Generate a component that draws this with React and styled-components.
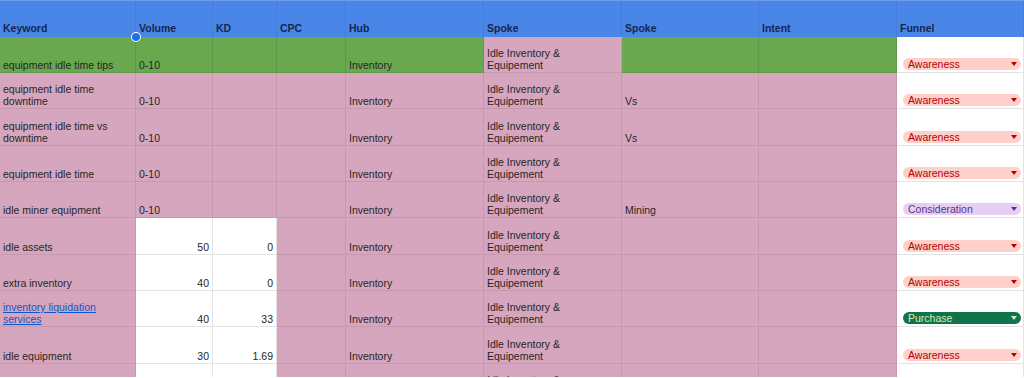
import React from "react";
import styled, { createGlobalStyle } from "styled-components";

const GlobalStyle = createGlobalStyle`
  html, body {
    margin: 0;
    padding: 0;
    background: #fff;
  }
  * {
    box-sizing: border-box;
  }
`;

const colors = {
  green: "#6aa84f",
  pink: "#d5a6bd",
  white: "#ffffff",
};

const lines = {
  green: "#5f9848",
  pink: "#c898af",
  white: "#e3e3e3",
};

const Sheet = styled.div`
  width: 1024px;
  height: 377px;
  overflow: hidden;
  display: grid;
  grid-template-columns: 136px 77px 64px 69px 138px 138px 137px 138px 127px;
  grid-template-rows: ${(p) => p.$rows};
  font-family: "Liberation Sans", Arial, sans-serif;
  font-size: 10.5px;
  line-height: 12px;
  color: #262626;
`;

const HeaderCell = styled.div`
  position: relative;
  display: flex;
  align-items: flex-end;
  padding: 0 3px 3px;
  background: #4a86e8;
  border-right: 1px solid #427cdc;
  border-top: 1px solid #6f9eed;
  font-weight: bold;
  color: #14264f;
`;

const SelectDot = styled.span`
  position: absolute;
  left: -4px;
  bottom: -4px;
  width: 8px;
  height: 8px;
  border-radius: 50%;
  background: #1a73e8;
  box-shadow: 0 0 0 1px #fff;
  z-index: 2;
`;

const Cell = styled.div`
  display: flex;
  align-items: flex-end;
  justify-content: ${(p) => (p.$right ? "flex-end" : "flex-start")};
  padding: 0 3px 1px;
  background: ${(p) => colors[p.$bg]};
  border-right: 1px solid ${(p) => lines[p.$bg]};
  border-bottom: 1px solid ${(p) => lines[p.$bg]};
  white-space: pre-line;
  overflow: hidden;
`;

const Link = styled.a`
  color: #1155cc;
  text-decoration: underline;
`;

const ChipCell = styled(Cell)`
  padding: 0 2px 2px 6px;
`;

const chipTones = {
  Awareness: { bg: "#ffcfc9", fg: "#b10202" },
  Consideration: { bg: "#e6cff2", fg: "#5a3286" },
  Purchase: { bg: "#11734b", fg: "#d4edbc" },
};

const Chip = styled.div`
  width: 100%;
  height: 12px;
  border-radius: 6px;
  display: flex;
  align-items: center;
  justify-content: space-between;
  padding: 0 4px 0 5px;
  background: ${(p) => chipTones[p.$tone].bg};
  color: ${(p) => chipTones[p.$tone].fg};
  font-size: 10.5px;
`;

const Caret = styled.span`
  width: 0;
  height: 0;
  border-left: 3px solid transparent;
  border-right: 3px solid transparent;
  border-top: 4px solid ${(p) => chipTones[p.$tone].fg};
`;

const headers = ["Keyword", "Volume", "KD", "CPC", "Hub", "Spoke", "Spoke", "Intent", "Funnel"];
const spoke = "Idle Inventory &\nEquipement";

const rows = [
  { kw: "equipment idle time tips", vol: "0-10", funnel: "Awareness", green: true, h: 36 },
  { kw: "equipment idle time\ndowntime", vol: "0-10", spoke2: "Vs", funnel: "Awareness", h: 36 },
  { kw: "equipment idle time vs\ndowntime", vol: "0-10", spoke2: "Vs", funnel: "Awareness", h: 37 },
  { kw: "equipment idle time", vol: "0-10", funnel: "Awareness", h: 36 },
  { kw: "idle miner equipment", vol: "0-10", spoke2: "Mining", funnel: "Consideration", h: 36 },
  { kw: "idle assets", vol: "50", kd: "0", num: true, funnel: "Awareness", h: 37 },
  { kw: "extra inventory", vol: "40", kd: "0", num: true, funnel: "Awareness", h: 36 },
  { kw: "inventory liquidation\nservices", link: true, vol: "40", kd: "33", num: true, funnel: "Purchase", h: 36 },
  { kw: "idle equipment", vol: "30", kd: "1.69", num: true, funnel: "Awareness", h: 37 },
  { kw: "", vol: "", kd: "", num: true, noHub: true, h: 36 },
];

export default function App() {
  const template = ["37px", ...rows.map((r) => `${r.h}px`)].join(" ");
  return (
    <>
      <GlobalStyle />
      <Sheet $rows={template}>
        {headers.map((h, i) => (
          <HeaderCell key={i}>
            {h}
            {i === 1 && <SelectDot />}
          </HeaderCell>
        ))}
        {rows.map((r, i) => {
          const base = r.green ? "green" : "pink";
          const numBg = r.num ? "white" : base;
          return (
            <React.Fragment key={i}>
              <Cell $bg={base}>{r.link ? <Link href="#">{r.kw}</Link> : r.kw}</Cell>
              <Cell $bg={numBg} $right={r.num}>{r.vol}</Cell>
              <Cell $bg={numBg} $right={r.num}>{r.kd || ""}</Cell>
              <Cell $bg={base} />
              <Cell $bg={base}>{r.noHub ? "" : "Inventory"}</Cell>
              <Cell $bg="pink">{spoke}</Cell>
              <Cell $bg={base}>{r.spoke2 || ""}</Cell>
              <Cell $bg={base} />
              <ChipCell $bg="white">
                {r.funnel && (
                  <Chip $tone={r.funnel}>
                    {r.funnel}
                    <Caret $tone={r.funnel} />
                  </Chip>
                )}
              </ChipCell>
            </React.Fragment>
          );
        })}
      </Sheet>
    </>
  );
}
